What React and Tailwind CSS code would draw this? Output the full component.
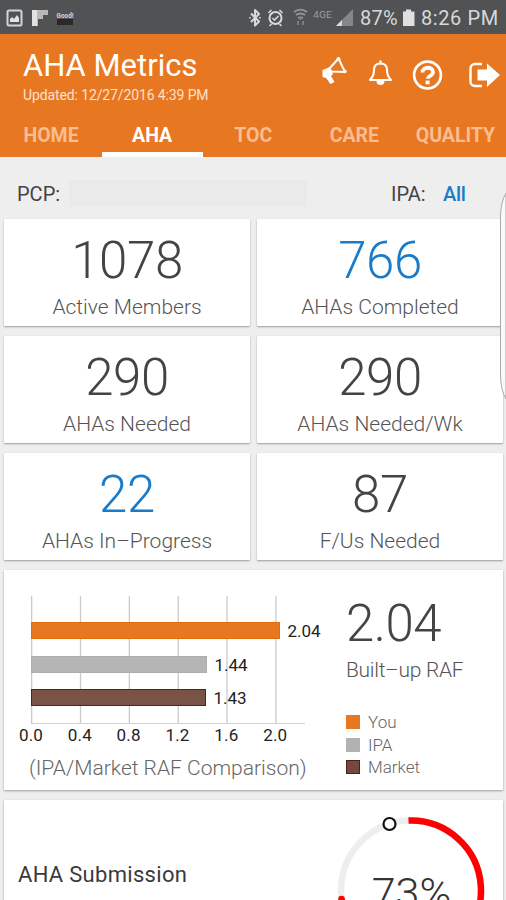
import React from 'react'

const tabs = ['HOME', 'AHA', 'TOC', 'CARE', 'QUALITY']

const metrics = [
  { value: '1078', label: 'Active Members' },
  { value: '766', label: 'AHAs Completed', link: true },
  { value: '290', label: 'AHAs Needed' },
  { value: '290', label: 'AHAs Needed/Wk' },
  { value: '22', label: 'AHAs In–Progress', link: true },
  { value: '87', label: 'F/Us Needed' },
]

const bars = [
  { label: '2.04', y: 52, width: 249, fill: '#e87722', edge: '#e56a08' },
  { label: '1.44', y: 86, width: 176, fill: '#b5b5b5', edge: '#adadad' },
  { label: '1.43', y: 119, width: 175, fill: '#7a5347', edge: '#5c1f14' },
]

const ticks = ['0.0', '0.4', '0.8', '1.2', '1.6', '2.0']

const StatusBar = () => (
  <div className="flex h-[34px] items-center justify-between bg-[#505254] pl-[6px] pr-[7px] text-[#d9d9d9]">
    <svg width="70" height="34" viewBox="0 0 70 34">
      <rect x="1.5" y="10.5" width="14" height="15" rx="1.5" fill="none" stroke="#d4d4d4" strokeWidth="2" />
      <path d="M4 22v-3l2-2 2 2 3-4 2 3v4z" fill="#e2e2e2" />
      <path d="M26 10h16v5h-5v4h-5v7h-6z" fill="#b9b9b9" />
      <path d="M26 10h5v16h-5z" fill="#e2e2e2" />
      <rect x="51" y="19" width="16" height="6" fill="#292929" />
      <text x="59" y="17.5" textAnchor="middle" fontSize="7" fontWeight="700" textLength="17" lengthAdjust="spacingAndGlyphs" fill="#d4d4d4">Good!</text>
    </svg>
    <div className="flex items-center">
      <svg width="112" height="34" viewBox="0 0 112 34" fill="none">
        <path d="M3 13.500l8 8-4 4V10l4 4-8 8" stroke="#d9d9d9" strokeWidth="2" strokeLinejoin="round" />
        <path d="M1 17.700h2M11 17.700h2" stroke="#bdbdbd" strokeWidth="1.5" />
        <circle cx="27.500" cy="18" r="6" stroke="#d9d9d9" strokeWidth="2" />
        <path d="M20.500 13l3-3M34.500 13l-3-3M23.500 24l-2 2M31.500 24l2 2M24.500 18l2 2 4-4" stroke="#d9d9d9" strokeWidth="1.6" />
        <path d="M46 12c4-3 9-3 13 0M48 15c3-2 6-2 9 0M50 18c2-1 3-1 5 0" stroke="#969798" strokeWidth="1.8" />
        <path d="M52.500 17v3M50 21v4M55 21v4" stroke="#858687" strokeWidth="1.7" />
        <text x="65" y="18" fontSize="9" textLength="19" lengthAdjust="spacingAndGlyphs" fill="#9a9b9c">4GE</text>
        <path d="M88 26L105 9v17z" fill="#858687" />
        <path d="M88 26l6-6v6z" fill="#d9d9d9" />
      </svg>
      <span className="w-[39px] whitespace-nowrap pt-[2px] text-[20px] leading-[32px] tracking-[0.3px]">87%</span>
      <svg className="ml-[3px]" width="14" height="34" viewBox="0 0 14 34">
        <path d="M1 11.500h3V9.500h5v2h3.500V26H1z" fill="#e0e0e0" />
      </svg>
      <span className="ml-[5px] w-[78px] whitespace-nowrap pt-[2px] text-[20px] leading-[32px] tracking-[0.6px]">8:26 PM</span>
    </div>
  </div>
)

const HeaderIcons = () => (
  <svg className="mr-[6px] mt-[20px]" width="186" height="42" viewBox="0 0 186 42" fill="none" stroke="#fff">
    {/* megaphone */}
    <path d="M15.500 14.500L24.500 4.500l6.500 13.500-14-.5z" strokeWidth="2" strokeLinejoin="round" />
    <circle cx="24.500" cy="5" r="2" fill="#fff" stroke="none" />
    <circle cx="31" cy="17.500" r="1.800" fill="#fff" stroke="none" />
    <path d="M8.500 16l7.500-3 3 7-2 2 3.500 6-4 2-4.500-6-3.500-1z" fill="#fff" stroke="none" />
    {/* bell */}
    <path d="M56 26c3-3 4-5 4-10 0-4 2.500-6.500 6.500-6.500S73 12 73 16c0 5 1 7 4 10z" strokeWidth="2.100" strokeLinejoin="round" />
    <path d="M66.500 7.500v2" strokeWidth="2.400" strokeLinecap="round" />
    <path d="M62.500 27h8a4 4 0 0 1-8 0z" fill="#fff" stroke="none" />
    {/* help */}
    <circle cx="113.500" cy="21" r="13.400" strokeWidth="2.700" />
    <path d="M108.500 18.500c0-6.500 10.500-6 10.500-.5 0 4-5.300 3.500-5.300 6.800" strokeWidth="3.800" />
    <rect x="111.600" y="26.500" width="4" height="3.800" fill="#fff" stroke="none" />
    {/* sign out */}
    <path d="M168 10h-7a4.500 4.500 0 0 0-4.500 4.500v13a4.500 4.500 0 0 0 4.500 4.500h7" strokeWidth="2.500" />
    <path d="M163.500 15.500h9.500v-6l13 11.500L173 33v-6.500h-9.500z" fill="#fff" stroke="none" />
  </svg>
)

const Header = () => (
  <div className="h-[123px] bg-[#e87722] text-white">
    <div className="flex h-[82px] justify-between">
      <div className="pl-[23px] pt-[14px]">
        <h1 className="whitespace-nowrap text-[31px] leading-[36px]">AHA Metrics</h1>
        <p className="mt-[3px] whitespace-nowrap text-[14px] leading-[16px] tracking-[-0.12px] text-[#ffe0cc]">Updated: 12/27/2016 4:39 PM</p>
      </div>
      <HeaderIcons />
    </div>
    <div className="grid h-[41px] grid-cols-5 pl-[0.5px] text-center text-[19.5px] font-bold leading-[40px]">
      {tabs.map((tab) => (
        <div
          key={tab}
          className={
            tab === 'AHA'
              ? 'h-[41px] border-b-[5px] border-white text-white'
              : 'h-[41px] text-[#f8bd91]'
          }
        >
          {tab}
        </div>
      ))}
    </div>
  </div>
)

const MetricCard = ({ value, label, link }) => (
  <div className="flex h-[107px] flex-col items-center rounded-[1px] bg-white shadow-[0_1px_2px_rgba(0,0,0,0.35)]">
    <div
      className={
        link
          ? 'mt-[11px] text-[51px] font-light leading-[61px] tracking-[-0.4px] text-[#1a7bc9]'
          : 'mt-[11px] text-[51px] font-light leading-[61px] tracking-[-0.4px] text-[#444]'
      }
    >
      {value}
    </div>
    <div className="mt-[4px] whitespace-nowrap text-[21px] font-light leading-[25px] text-[#555]">{label}</div>
  </div>
)

const RafChart = () => (
  <svg width="330" height="180" viewBox="0 0 330 180">
    {ticks.map((tick, i) => (
      <g key={tick}>
        <rect x={27 + i * 48.85} y="26" width="1.300" height="127" fill="#cacaca" />
        <text x={27 + i * 48.85} y="171" textAnchor="middle" fontSize="17" letterSpacing="0.2" fill="#222">{tick}</text>
      </g>
    ))}
    <rect x="27" y="153" width="274" height="1" fill="#d2d2d2" />
    {bars.map((bar) => (
      <g key={bar.label}>
        <rect x="27" y={bar.y} width={bar.width} height="17" fill={bar.fill} />
        <rect x="27.500" y={bar.y + 0.5} width={bar.width - 1} height="16" fill="none" stroke={bar.edge} />
        <text x={bar.width + 34.5} y={bar.y + 15} fontSize="17" fill="#222">{bar.label}</text>
      </g>
    ))}
  </svg>
)

const LegendItem = ({ color, label }) => (
  <div className="flex h-[22.5px] items-center">
    <span className={`size-[14px] ${color}`} />
    <span className="ml-[8px] text-[17px] font-light leading-[22px] text-[#666]">{label}</span>
  </div>
)

const RafCard = () => (
  <div className="mt-[10px] flex h-[220px] bg-white shadow-[0_1px_2px_rgba(0,0,0,0.35)]">
    <div className="w-[342px]">
      <RafChart />
      <p className="ml-[25px] whitespace-nowrap text-[21px] font-light leading-[36px] text-[#666]">
        (IPA/Market RAF Comparison)
      </p>
    </div>
    <div className="pt-[23px]">
      <div className="whitespace-nowrap text-[51px] font-light leading-[62px] tracking-[-0.5px] text-[#444]">2.04</div>
      <div className="mt-[3px] whitespace-nowrap text-[21px] font-light leading-[25px] tracking-[-0.3px] text-[#555]">Built–up RAF</div>
      <div className="mt-[28px]">
        <LegendItem color="bg-[#e87722]" label="You" />
        <LegendItem color="bg-[#b2b2b2]" label="IPA" />
        <LegendItem color="bg-[#75493d] border border-[#561e13]" label="Market" />
      </div>
    </div>
  </div>
)

const SubmissionCard = () => (
  <div className="mt-[10px] flex h-[170px] justify-between bg-white shadow-[0_1px_2px_rgba(0,0,0,0.35)]">
    <div className="ml-[14px] mt-[60px] whitespace-nowrap text-[22px] leading-[30px] tracking-[0.3px] text-[#3a3a3a]">AHA Submission</div>
    <svg className="mr-[12px]" width="160" height="170" viewBox="0 0 160 170">
      <circle cx="80" cy="90.500" r="70" fill="none" stroke="#eee" strokeWidth="6.500" />
      <path d="M77.500 20.500A70 70 0 1 1 10.500 99" fill="none" stroke="#f00" strokeWidth="6.500" />
      <circle cx="10.500" cy="99" r="3.250" fill="#f00" />
      <circle cx="58.500" cy="24" r="6" fill="#fff" stroke="#111" strokeWidth="2.200" />
      <text x="80.500" y="107.500" textAnchor="middle" fontSize="43" fontWeight="300" fill="#333">73%</text>
    </svg>
  </div>
)

const App = () => {
  return (
    <div className="relative h-[900px] w-[506px] overflow-hidden bg-[#eee] font-['Roboto',sans-serif]">
      <StatusBar />
      <Header />
      <div className="flex h-[62px] items-center pt-[11px] text-[20px] leading-[24px] text-[#444]">
        <span className="ml-[17px] w-[52px]">PCP:</span>
        <span className="h-[27px] w-[238px] bg-[#eaeaea]" />
        <span className="ml-[84px] w-[52px]">IPA:</span>
        <span className="font-medium tracking-[-0.3px] text-[#1a7bc9]">All</span>
      </div>
      <div className="ml-[4px] mr-[3px]">
        <div className="grid grid-cols-2 gap-x-[7px] gap-y-[10px]">
          {metrics.map((m) => (
            <MetricCard key={m.label} value={m.value} label={m.label} link={m.link} />
          ))}
        </div>
        <RafCard />
        <SubmissionCard />
      </div>
      {/* edge panel handle peeking in from the right */}
      <svg className="absolute right-0 top-[190px]" width="7" height="212" viewBox="0 0 7 212">
        <path d="M7 3Q1.500 12 1.500 28V184Q1.500 200 7 209z" fill="#fafafa" stroke="#aaa" />
      </svg>
    </div>
  )
}

export default App
